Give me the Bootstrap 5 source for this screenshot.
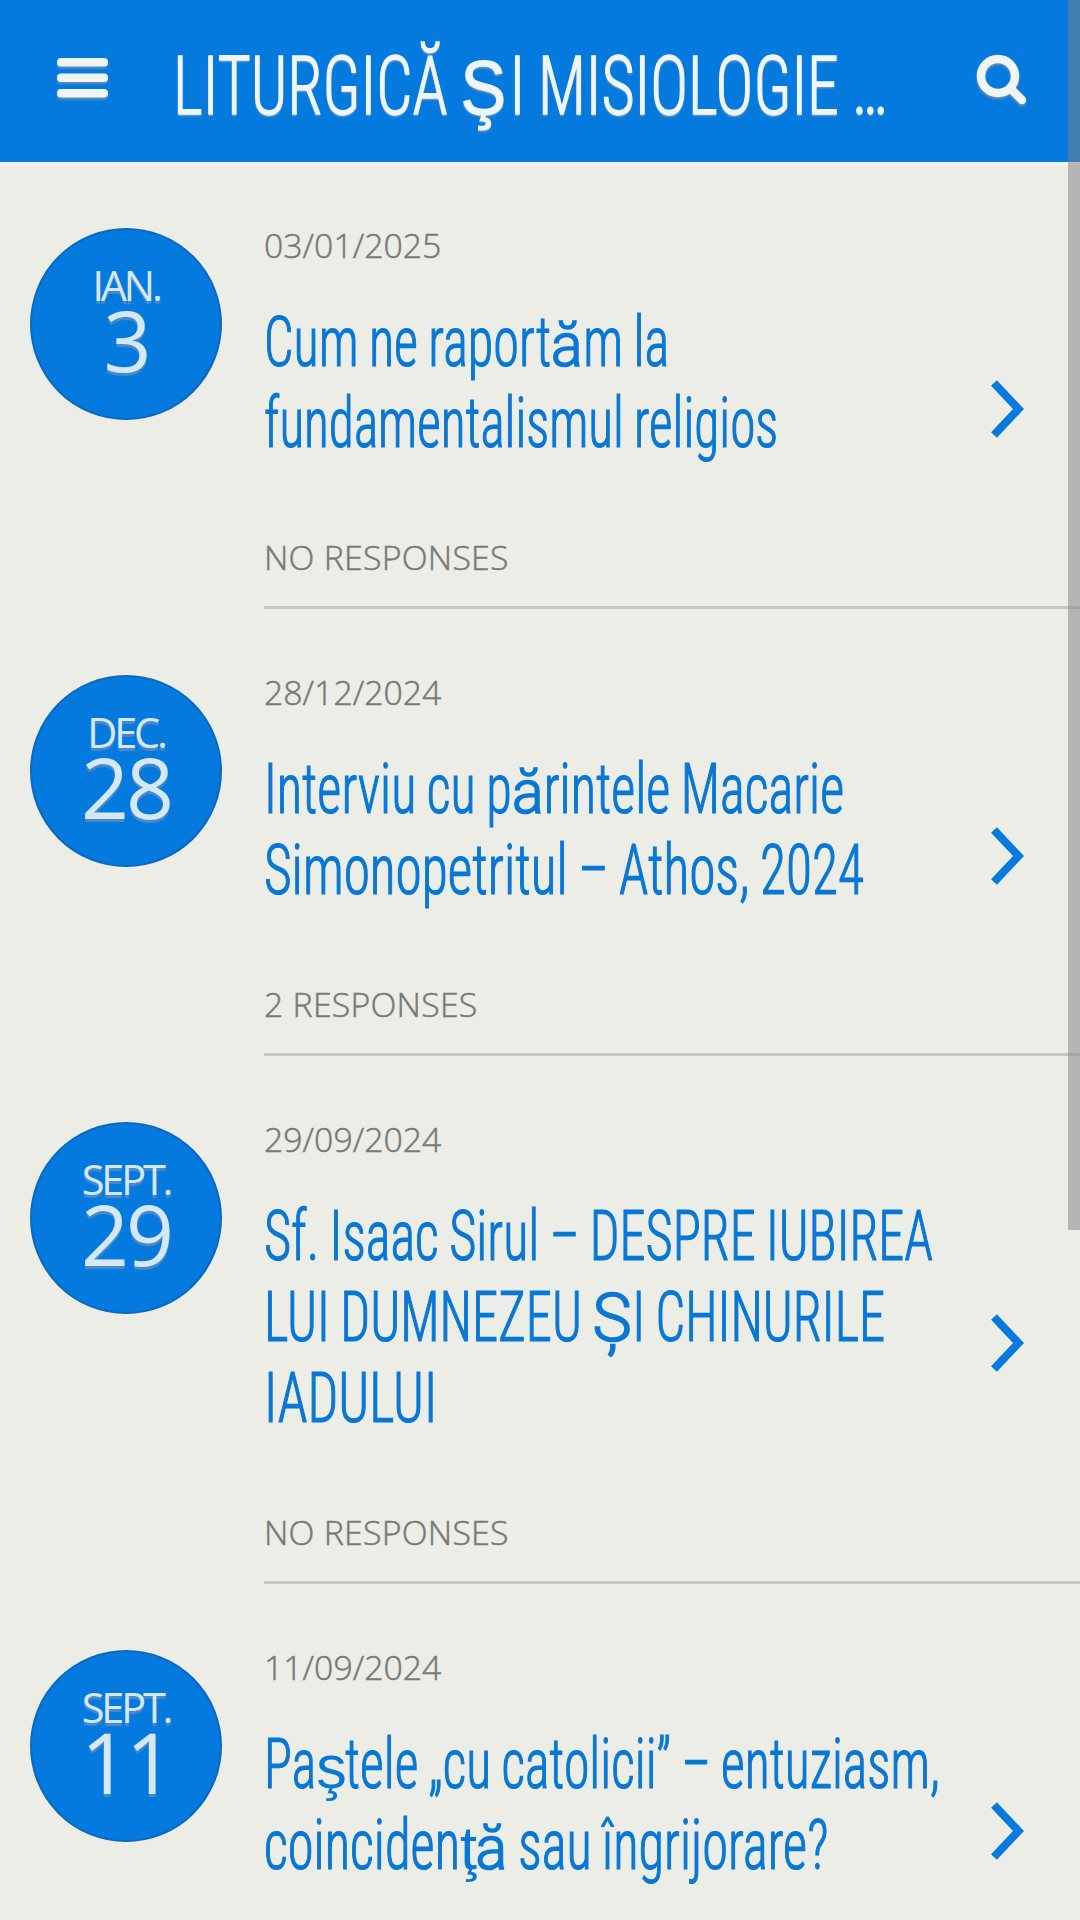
<!DOCTYPE html>
<html lang="ro">
<head>
<meta charset="utf-8">
<meta name="viewport" content="width=device-width, initial-scale=1">
<title>Liturgică şi Misiologie</title>
<link rel="stylesheet" href="https://cdn.jsdelivr.net/npm/bootstrap@5.3.0/dist/css/bootstrap.min.css">
<style>
  body { background: #ebede6; font-family: "Open Sans", sans-serif; }
  .topbar { height: 162px; padding: 0 50px 0 57px; background: #047adf; box-shadow: 0 3px 0 #f1f4f3; }
  .topbar svg { filter: drop-shadow(0 2px 1px rgba(130,150,170,.75)); }
  .burger { margin-top: -6px; }
  .site-name { width: 712px; margin: 10px 0 0 65px; color: #eff5fb; font-size: 81.5px; line-height: 152px; font-weight: 300; text-shadow: 0 2px 2px rgba(150,165,180,.8); -webkit-text-stroke: 1.4px #eff5fb; }
  .squeeze { display: block; width: max-content; white-space: nowrap; font-family: Roboto, sans-serif; font-stretch: 75%; word-spacing: -2px; transform: scaleX(var(--k, .8)); transform-origin: 0 50%; }
  /* letters shown at their natural width inside a condensed line */
  .wide { display: inline-block; line-height: 1; width: calc(var(--w) / var(--k, .8)); }
  .wide > span { display: inline-block; font-family: "Liberation Sans", sans-serif; font-stretch: 100%; -webkit-text-stroke: 0; transform: scaleX(calc(var(--s, 1) / var(--k, .8))); transform-origin: 0 50%; }
  .w-s { --w: 49px; --s: .9; } .w-s > span { font-size: 76px; font-weight: 400; -webkit-text-stroke: 1.2px #eff5fb; }
  .w-a { --w: 32px; --s: .95; } .w-a > span { font-family: Roboto, sans-serif; font-size: 62px; font-weight: 300; -webkit-text-stroke: 1.7px #0877d6; }
  .w-c { --w: 40px; } .w-c > span { font-family: Roboto, sans-serif; font-size: 66px; font-weight: 300; -webkit-text-stroke: 1.7px #0877d6; }
  .w-z { --w: 29px; } .w-z > span { font-size: 61px; font-weight: 400; }
  .w-t { --w: 16px; } .w-t > span { font-size: 61px; font-weight: 400; }
  .posts { height: 1758px; }
  .post { padding-left: 30px; }
  .stamp { width: 192px; height: 192px; margin-top: 66px; padding-top: 30px; background: #047adf; border: 2px solid #0a69bf; color: #d6e8f8; text-shadow: 0 3px 1px rgba(120,150,185,.6); }
  .stamp-month { font-size: 41.5px; line-height: 50px; letter-spacing: -3.2px; }
  .stamp-day { font-size: 84px; line-height: 60px; letter-spacing: -3px; }
  .post-body { margin-left: 42px; height: 447px; border-bottom: 3px solid #c6c7c1; }
  .post-text { width: 690px; }
  .tall { height: 528px; }
  .meta { color: #797a76; font-size: 33.8px; line-height: 44px; font-weight: 300; -webkit-text-stroke: .5px #797a76; }
  .post-date { padding-top: 61px; }
  .replies { letter-spacing: .25px; }
  .post-title { color: #0877d6; font-size: 70.5px; line-height: 81px; margin: 35px 0 71px; font-weight: 300; -webkit-text-stroke: 1.2px #0877d6; }
  .arrow { margin-right: 54px; margin-top: 49px; }
  .thumb { width: 12px; height: 1230px; background: rgba(128,128,128,.5); }
</style>
</head>
<body class="position-relative">
<header class="topbar d-flex align-items-center">
  <svg class="burger" width="51" height="44" viewBox="0 0 51 44" fill="#f1f4f5"><rect y="2" width="51" height="8.5" rx="4"/><rect y="17.5" width="51" height="8.5" rx="4"/><rect y="33" width="51" height="8.5" rx="4"/></svg>
  <div class="site-name"><span class="squeeze" data-w="715">LITURGICĂ <span class="wide w-s"><span>Ş</span></span>I MISIOLOGIE …</span></div>
  <svg class="ms-auto" width="54" height="54" viewBox="0 0 54 54" fill="none" stroke="#f1f4f5" stroke-width="8.5" stroke-linecap="round"><circle cx="22" cy="22" r="17"/><path d="M36 36 46 46"/></svg>
</header>
<main class="posts overflow-hidden">
  <article class="post d-flex">
    <div class="stamp rounded-circle text-center flex-shrink-0"><div class="stamp-month">IAN.</div><div class="stamp-day">3</div></div>
    <div class="post-body d-flex flex-grow-1 justify-content-between align-items-center">
      <div class="post-text align-self-start">
        <div class="meta post-date">03/01/2025</div>
        <h2 class="post-title"><span class="squeeze" data-w="405">Cum ne raport<span class="wide w-a"><span>ă</span></span>m la</span><span class="squeeze" data-w="514">fundamentalismul religios</span></h2>
        <div class="meta replies">NO RESPONSES</div>
      </div>
      <svg class="arrow flex-shrink-0" width="36" height="60" viewBox="0 0 36 60" fill="none" stroke="#047adf" stroke-width="8"><path d="M4 4 28.5 30 4 56"/></svg>
    </div>
  </article>
  <article class="post d-flex">
    <div class="stamp rounded-circle text-center flex-shrink-0"><div class="stamp-month">DEC.</div><div class="stamp-day">28</div></div>
    <div class="post-body d-flex flex-grow-1 justify-content-between align-items-center">
      <div class="post-text align-self-start">
        <div class="meta post-date">28/12/2024</div>
        <h2 class="post-title"><span class="squeeze" data-w="580">Interviu cu p<span class="wide w-a"><span>ă</span></span>rintele Macarie</span><span class="squeeze" data-w="600">Simonopetritul – Athos, 2024</span></h2>
        <div class="meta replies">2 RESPONSES</div>
      </div>
      <svg class="arrow flex-shrink-0" width="36" height="60" viewBox="0 0 36 60" fill="none" stroke="#047adf" stroke-width="8"><path d="M4 4 28.5 30 4 56"/></svg>
    </div>
  </article>
  <article class="post d-flex">
    <div class="stamp rounded-circle text-center flex-shrink-0"><div class="stamp-month">SEPT.</div><div class="stamp-day">29</div></div>
    <div class="post-body tall d-flex flex-grow-1 justify-content-between align-items-center">
      <div class="post-text align-self-start">
        <div class="meta post-date">29/09/2024</div>
        <h2 class="post-title"><span class="squeeze" data-w="669">Sf. Isaac Sirul – DESPRE IUBIREA</span><span class="squeeze" data-w="621">LUI DUMNEZEU <span class="wide w-c"><span>Ș</span></span>I CHINURILE</span><span class="squeeze" data-w="173">IADULUI</span></h2>
        <div class="meta replies">NO RESPONSES</div>
      </div>
      <svg class="arrow flex-shrink-0" width="36" height="60" viewBox="0 0 36 60" fill="none" stroke="#047adf" stroke-width="8"><path d="M4 4 28.5 30 4 56"/></svg>
    </div>
  </article>
  <article class="post d-flex">
    <div class="stamp rounded-circle text-center flex-shrink-0"><div class="stamp-month">SEPT.</div><div class="stamp-day">11</div></div>
    <div class="post-body d-flex flex-grow-1 justify-content-between align-items-center">
      <div class="post-text align-self-start">
        <div class="meta post-date">11/09/2024</div>
        <h2 class="post-title"><span class="squeeze" data-w="676">Pa<span class="wide w-z"><span>ş</span></span>tele „cu catolicii” – entuziasm,</span><span class="squeeze" data-w="564">coinciden<span class="wide w-t"><span>ţ</span></span><span class="wide w-a"><span>ă</span></span> sau îngrijorare?</span></h2>
      </div>
      <svg class="arrow flex-shrink-0" width="36" height="60" viewBox="0 0 36 60" fill="none" stroke="#047adf" stroke-width="8"><path d="M4 4 28.5 30 4 56"/></svg>
    </div>
  </article>
</main>
<div class="thumb position-absolute top-0 end-0"></div>
<script src="https://cdn.jsdelivr.net/npm/bootstrap@5.3.0/dist/js/bootstrap.bundle.min.js"></script>
<script>
  // Condense every heading line to its measure.
  document.querySelectorAll('.squeeze').forEach(function (line) {
    for (var i = 0; i < 12; i++) line.style.setProperty('--k', line.dataset.w / line.offsetWidth);
  });
</script>
</body>
</html>
